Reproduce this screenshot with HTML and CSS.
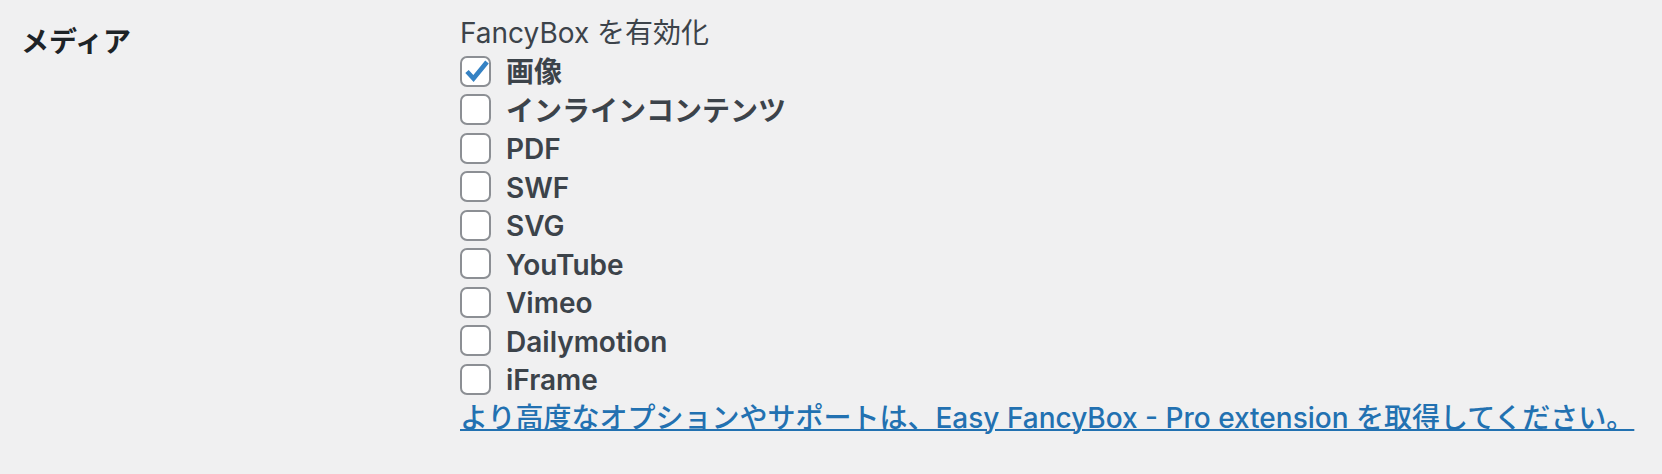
FILE: index.html
```html
<!DOCTYPE html>
<html lang="ja">
<head>
  <meta charset="UTF-8" />
  <title>Easy FancyBox 設定</title>
  <link rel="stylesheet" href="styles.css">
</head>
<body>

<div class="form-table">
  <div class="form-row">
    <div class="form-th">メディア</div>
    <div class="form-td">
      <p class="legend">FancyBox を有効化</p>

      <label class="opt">
        <span class="box">
          <svg viewBox="0 0 27 27" width="27" height="27"><path d="M5 13.5 L11.5 20.5 L25 4" fill="none" stroke="#3582c4" stroke-width="4.6" /></svg>
        </span>
        <span class="opt-text">画像</span>
      </label>
      <label class="opt"><span class="box"></span><span class="opt-text">インラインコンテンツ</span></label>
      <label class="opt"><span class="box"></span><span class="opt-text">PDF</span></label>
      <label class="opt"><span class="box"></span><span class="opt-text">SWF</span></label>
      <label class="opt"><span class="box"></span><span class="opt-text">SVG</span></label>
      <label class="opt"><span class="box"></span><span class="opt-text">YouTube</span></label>
      <label class="opt"><span class="box"></span><span class="opt-text">Vimeo</span></label>
      <label class="opt"><span class="box"></span><span class="opt-text">Dailymotion</span></label>
      <label class="opt"><span class="box"></span><span class="opt-text">iFrame</span></label>

      <a class="pro-link" href="#">より高度なオプションやサポートは、Easy FancyBox - Pro extension を取得してください。</a>
    </div>
  </div>
</div>

</body>
</html>
```

FILE: styles.css
```css
body {
  margin: 0;
  background: #f0f0f1;
  font-family: Inter, "Noto Sans CJK JP", sans-serif;
  font-size: 28px;
  color: #3c434a;
}
.form-row {
  display: grid;
  grid-template-columns: 460px 1fr;
}
.form-th {
  padding: 23px 0 0 21px;
  line-height: 38.5px;
  font-weight: 700;
  color: #1d2327;
}
.form-td {
  padding-top: 13.5px;
  line-height: 38.5px;
}
.legend {
  margin: 0;
}
.opt {
  display: flex;
  align-items: center;
  gap: 15px;
  height: 38.5px;
  font-weight: 600;
}
.box {
  flex: none;
  width: 31px;
  height: 31px;
  box-sizing: border-box;
  border: 2px solid #8c8f94;
  border-radius: 7px;
  background: #fff;
}
.box svg {
  display: block;
}
.opt-text {
  padding-top: 3px;
  line-height: 35.5px;
}
.pro-link {
  color: #2271b1;
  font-weight: 500;
  text-decoration-thickness: 2px;
}
```
